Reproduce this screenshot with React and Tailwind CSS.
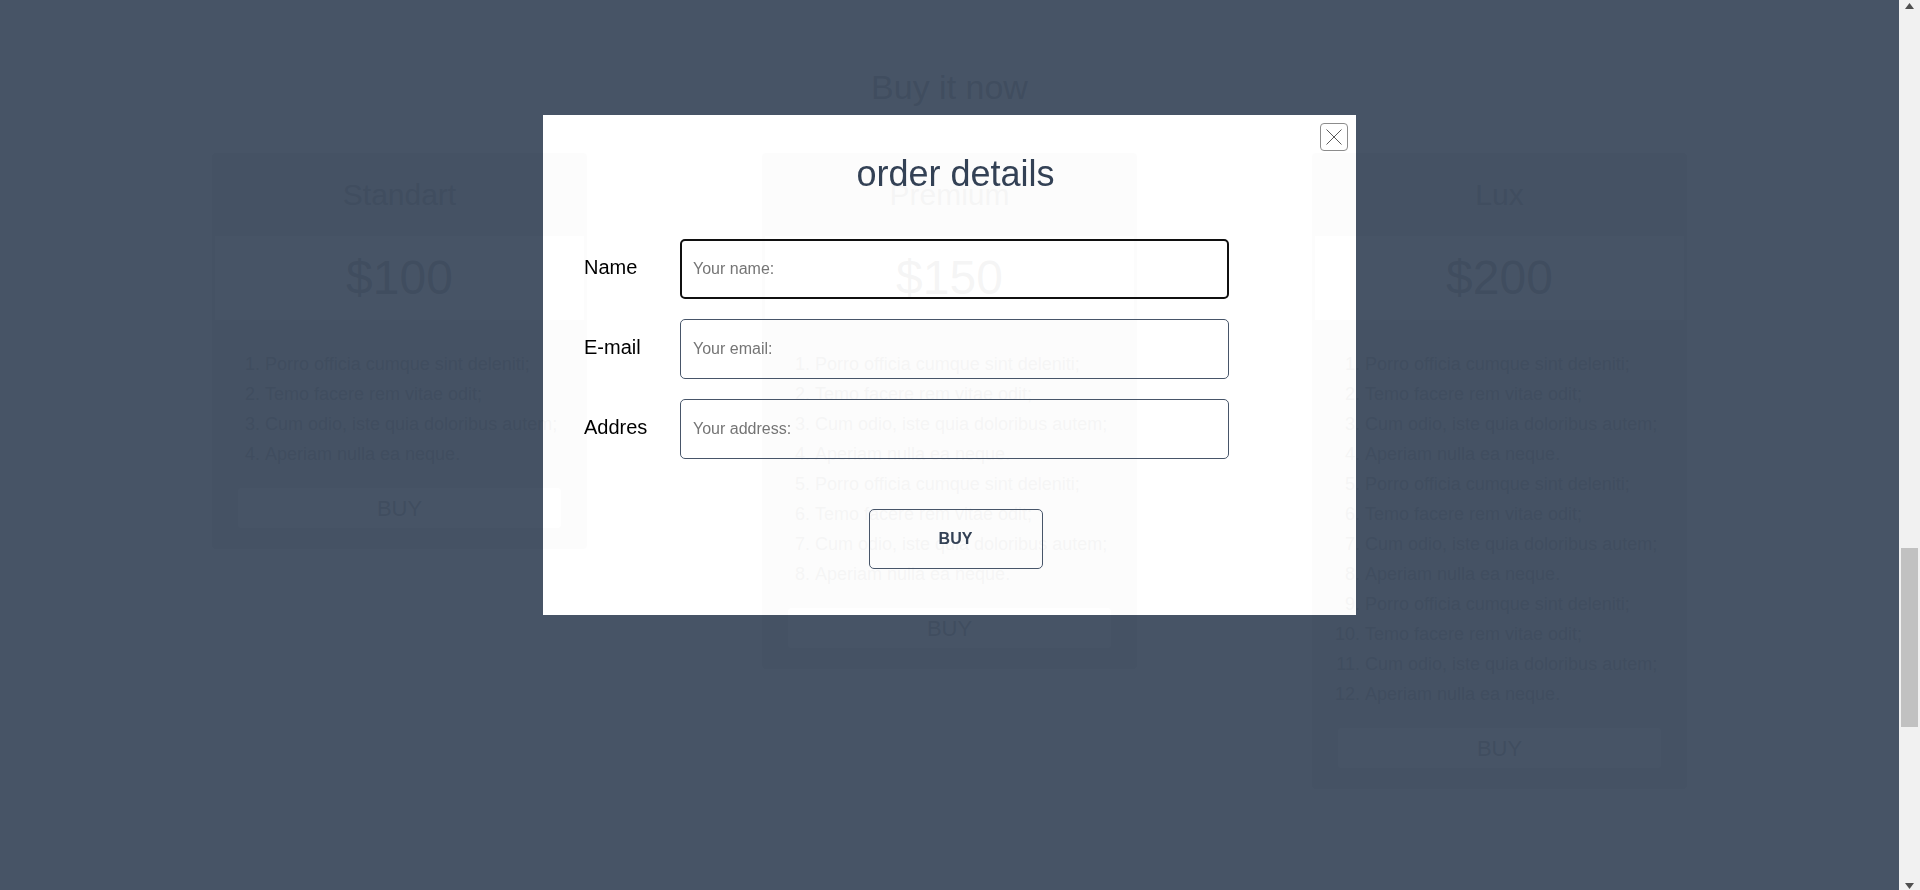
import React from 'react';

const items = [
  'Porro officia cumque sint deleniti;',
  'Temo facere rem vitae odit;',
  'Cum odio, iste quia doloribus autem;',
  'Aperiam nulla ea neque.',
];

const plans = [
  { title: 'Standart', price: '$100', repeat: 1 },
  { title: 'Premium', price: '$150', repeat: 2 },
  { title: 'Lux', price: '$200', repeat: 3 },
];

function PlanCard({ title, price, repeat }) {
  const list = Array.from({ length: repeat }).flatMap(() => items);
  return (
    <div className="w-[375px] bg-[#dedede] rounded-[4px] pb-[21px] text-[#969696]">
      <div className="h-[83px] flex items-center justify-center text-[30px]">{title}</div>
      <div className="mx-[3px] h-[84px] bg-white flex items-center justify-center text-[48px]">{price}</div>
      <ol className="mt-[29px] pl-[53px] pr-4 list-decimal text-[18px] leading-[30px]">
        {list.map((t, i) => (
          <li key={i}>{t}</li>
        ))}
      </ol>
      <button className="mt-[19px] mx-[26px] w-[323px] h-[40px] bg-white rounded-[4px] text-[22px] text-[#969696]">
        BUY
      </button>
    </div>
  );
}

function OrderModal() {
  const fields = [
    { label: 'Name', placeholder: 'Your name:', focused: true },
    { label: 'E-mail', placeholder: 'Your email:' },
    { label: 'Addres', placeholder: 'Your address:' },
  ];

  return (
    <div className="fixed top-0 bottom-0 left-0 right-[21px] z-10 flex justify-center items-start pt-[115px]">
      <div className="relative w-[813px] bg-white/90 shadow-[0_0_0_9999px_rgba(57,71,90,0.93)] pt-[38px] pb-[46px] pl-[41px] pr-[29px]">
        {/* close */}
        <button className="absolute top-[8px] right-[8px] w-[28px] h-[28px] border border-[#8c8c8c] rounded-[4px] flex items-center justify-center bg-white">
          <svg width="16" height="16" viewBox="0 0 16 16">
            <path d="M0.5 0.5 L15.5 15.5 M15.5 0.5 L0.5 15.5" stroke="#5a5a5a" strokeWidth="1" fill="none" />
          </svg>
        </button>

        <h2 className="text-center text-[36px] leading-[41px] text-[#334155]">order details</h2>

        <form className="mt-[45px] flex flex-col gap-[20px]" onSubmit={e => e.preventDefault()}>
          {fields.map(f => (
            <div key={f.label} className="flex">
              <label className="w-[96px] pt-[17px] text-[20px] leading-[23px] text-black">{f.label}</label>
              <input
                type="text"
                autoFocus={f.focused}
                placeholder={f.placeholder}
                className={
                  f.focused
                    ? 'w-[549px] h-[60px] border-2 border-[#101010] rounded-[5px] px-[11px] text-[16px] bg-transparent outline-none placeholder:text-[#757575]'
                    : 'w-[549px] h-[60px] border border-[#475569] rounded-[5px] px-[12px] text-[16px] bg-transparent outline-none placeholder:text-[#757575]'
                }
              />
            </div>
          ))}
          <button
            type="submit"
            className="mx-auto mt-[30px] w-[174px] h-[60px] border border-[#475569] rounded-[5px] bg-transparent font-bold text-[16px] text-[#334155]"
          >
            BUY
          </button>
        </form>
      </div>
    </div>
  );
}

function Scrollbar() {
  return (
    <div className="relative z-20 w-[21px] h-full bg-[#f1f1f1] flex flex-col items-center">
      <svg className="mt-[3px]" width="9" height="6" viewBox="0 0 9 6">
        <path d="M4.5 0 L9 6 L0 6 Z" fill="#505050" />
      </svg>
      <div className="mt-[539px] w-[17px] h-[179px] bg-[#c1c1c1]" />
      <svg className="mt-auto mb-[1px]" width="9" height="6" viewBox="0 0 9 6">
        <path d="M0 0 L9 0 L4.5 6 Z" fill="#505050" />
      </svg>
    </div>
  );
}

export default function App() {
  return (
    <div className="h-screen w-full flex overflow-hidden bg-white font-['Liberation_Sans',Arial,sans-serif]">
      <main className="flex-1 pt-[68px]">
        <h1 className="text-center text-[34px] leading-[39px] text-[#969696]">Buy it now</h1>
        <div className="mt-[46px] flex justify-center items-start gap-[175px]">
          {plans.map(p => (
            <PlanCard key={p.title} {...p} />
          ))}
        </div>
      </main>
      <Scrollbar />
      <OrderModal />
    </div>
  );
}
